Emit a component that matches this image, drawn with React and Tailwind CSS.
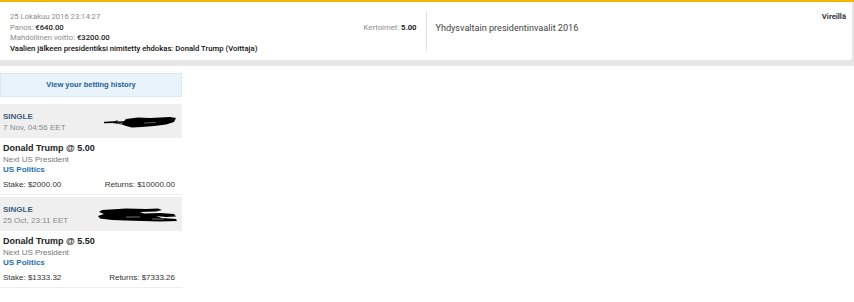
import React from "react";

function Scribble({ variant }) {
  if (variant === 1) {
    return (
      <svg width="74" height="14" viewBox="0 0 74 14" className="shrink-0">
        <path d="M2 7 L10 6.5 L14 5 L12 8 L18 8.5 L22 4 L34 2.5 L46 3 L56 2.5 L66 2 L72 3 L70 7 L62 9.5 L50 11 L38 12 L28 12.5 L22 11 L18 9.5 Z" fill="#000" />
        <path d="M0 7.5 L20 7" stroke="#000" strokeWidth="1.5" />
        <path d="M40 8 L52 7.5" stroke="#777" strokeWidth="0.8" />
      </svg>
    );
  }
  return (
    <svg width="82" height="16" viewBox="0 0 82 16" className="shrink-0">
      <path d="M6 3 L30 1.5 L50 2 L62 1.5 L66 3 L60 4.5 L44 5 L48 6.5 L64 6 L78 7 L80 9.5 L70 10 L60 9 L66 11 L80 12 L81 14 L64 14.5 L46 14 L30 13.5 L16 13 L4 11.5 L2 9 L8 7 L3 5 Z" fill="#000" />
      <path d="M30 10 L44 10" stroke="#888" strokeWidth="0.8" />
      <path d="M56 12 L68 12" stroke="#888" strokeWidth="0.8" />
    </svg>
  );
}

function Bet({ date, odds, stake, returns, variant }) {
  return (
    <div className="flex flex-col">
      <div className="flex items-center justify-between bg-[#efefef] h-[34px] pl-[3px] pr-[4px] pt-[2px]">
        <div className="flex flex-col leading-[11px]">
          <span className="text-[8px] font-bold text-[#3d5d7e]">SINGLE</span>
          <span className="text-[8px] text-[#8a8a8a]">{date}</span>
        </div>
        <Scribble variant={variant} />
      </div>
      <div className="flex flex-col px-[3px] pt-[4px] pb-[4px] border-b border-[#eeeeee]">
        <span className="text-[9px] font-bold text-[#222] leading-[12px]">Donald Trump @ {odds}</span>
        <span className="text-[8px] text-[#777] leading-[11px]">Next US President</span>
        <span className="text-[8px] font-bold text-[#1f6fb5] leading-[10px]">US Politics</span>
        <div className="flex justify-between text-[8px] text-[#333] leading-[10px] mt-[5px] pr-[4px]">
          <span>Stake: {stake}</span>
          <span>Returns: {returns}</span>
        </div>
      </div>
    </div>
  );
}

export default function App() {
  return (
    <div className="w-[854px] h-[302px] bg-white overflow-hidden" style={{ fontFamily: "Roboto, 'Liberation Sans', sans-serif" }}>
      <div className="bg-[#e6e6e6] pb-[6px]">
        <div className="h-[2px] bg-[#f6b400]" />
        <div className="flex bg-white mr-[2px] rounded-br-[3px] h-[58px]">
          <div className="flex flex-1 justify-between pl-[10px] pr-[10px] pt-[10px]">
            <div className="flex flex-col text-[7.7px] leading-[10.5px] text-[#8c8c8c]">
              <span>25 Lokakuu 2016 23:14:27</span>
              <span>Panos: <span className="font-medium text-[#222]">€640.00</span></span>
              <span>Mahdollinen voitto: <span className="font-medium text-[#222]">€3200.00</span></span>
              <span className="font-medium text-[#111]">Vaalien jälkeen presidentiksi nimitetty ehdokas: Donald Trump (Voittaja)</span>
            </div>
            <div className="text-[7.7px] leading-[10.5px] text-[#8c8c8c] pt-[10.5px]">
              Kertoimet: <span className="font-bold text-[#222]">5.00</span>
            </div>
          </div>
          <div className="w-px bg-[#e2e2e2] my-[9px]" />
          <div className="flex flex-[1.01] justify-between pl-[8px] pr-[6px] pt-[10px]">
            <div className="text-[9.1px] text-[#444] pt-[10px]">Yhdysvaltain presidentinvaalit 2016</div>
            <div className="text-[7.7px] font-bold text-[#333] leading-[10.5px]">Vireillä</div>
          </div>
        </div>
      </div>
      <div className="w-[182px] pt-[7px] flex flex-col gap-[7px]" style={{ fontFamily: "'Liberation Sans', Arial, sans-serif" }}>
        <div className="h-[24px] flex items-center justify-center bg-[#e8f3fb] border border-[#dbe8f2] text-[7.5px] font-bold text-[#1d5f9b]">
          View your betting history
        </div>
        <div className="flex flex-col gap-[2px]">
          <Bet date="7 Nov, 04:56 EET" odds="5.00" stake="$2000.00" returns="$10000.00" variant={1} />
          <Bet date="25 Oct, 23:11 EET" odds="5.50" stake="$1333.32" returns="$7333.26" variant={2} />
        </div>
      </div>
    </div>
  );
}
